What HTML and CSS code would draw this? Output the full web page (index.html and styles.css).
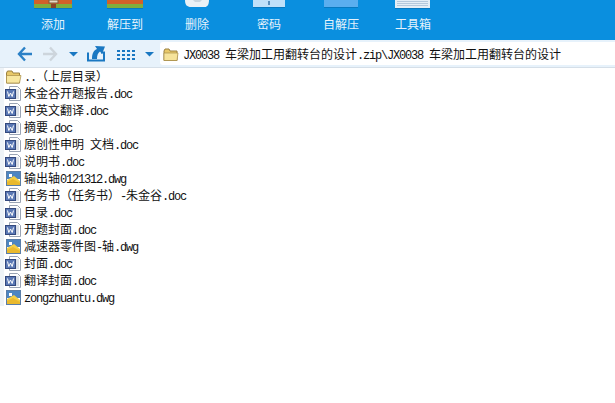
FILE: index.html
```html
<!DOCTYPE html>
<html lang="zh">
<head>
<meta charset="utf-8">
<title>WinRAR</title>
<link rel="stylesheet" href="styles.css">
</head>
<body>
<header class="toolbar">
  <div class="tool">
    <svg class="tool-icon" width="38" height="9" viewBox="0 0 38 9"><rect width="38" height="4" fill="#d2602a"/><rect y="4" width="38" height="4" fill="#7fae3e"/><rect y="8" width="38" height="1" fill="#0779c0"/><rect x="15" width="9" height="3" fill="#e8dcc4" stroke="#7b5a3a"/><rect x="17" y="4" width="5" height="4" fill="#8a4526"/></svg>
    <span>添加</span>
  </div>
  <div class="tool">
    <svg class="tool-icon" width="38" height="9" viewBox="0 0 38 9"><rect x="1" width="36" height="4" fill="#d2602a"/><rect x="1" y="4" width="36" height="4" fill="#7fae3e"/><rect x="1" y="8" width="36" height="1" fill="#0779c0"/></svg>
    <span>解压到</span>
  </div>
  <div class="tool">
    <svg class="tool-icon" width="38" height="9" viewBox="0 0 38 9"><path d="M7 0C7 5 9 7 13 7H27C29 7 31 5 31 0Z" fill="#e9f1f6"/><path d="M15 0H24L22 2H17Z" fill="#c9d6df"/></svg>
    <span>删除</span>
  </div>
  <div class="tool">
    <svg class="tool-icon" width="38" height="9" viewBox="0 0 38 9"><rect x="3" width="32" height="7" fill="#bfe0f9"/><rect x="18" y="1" width="2" height="4" fill="#5a8fbd"/><rect x="3" y="7" width="32" height="1" fill="#0779c0"/></svg>
    <span>密码</span>
  </div>
  <div class="tool">
    <svg class="tool-icon" width="38" height="9" viewBox="0 0 38 9"><rect x="2" width="34" height="7" fill="#5aaeef"/><rect x="2" y="7" width="34" height="1" fill="#0779c0"/></svg>
    <span>自解压</span>
  </div>
  <div class="tool">
    <svg class="tool-icon" width="38" height="9" viewBox="0 0 38 9"><rect x="1" width="35" height="8" fill="#e4eef6"/><path d="M3 1.5H34M3 3.5H34M3 5.5H34" stroke="#b4c8dc"/><rect x="1" y="8" width="35" height="1" fill="#0779c0"/></svg>
    <span>工具箱</span>
  </div>
</header>
<nav class="navbar">
  <svg class="nav-icons" width="160" height="27" viewBox="0 0 160 27">
    <path d="M19 14H32M25 7.5L19 14L25 20.5" fill="none" stroke="#2a80c6" stroke-width="2.4"/>
    <path d="M43 14H56M50 7.5L56 14L50 20.5" fill="none" stroke="#cdd5dc" stroke-width="2.4"/>
    <path d="M69 12H78L73.500 16.500Z" fill="#1a78c2"/>
    <path d="M88 12.500V20.500H104V12.500H101" fill="none" stroke="#1a78c2" stroke-width="2"/>
    <path d="M92 19C92 13 94 10 97 9L95 6L105 6.500L102 14L100 11.500C98 13 97 15 97 19Z" fill="#1a78c2"/>
    <path d="M117 10h3v2h-3zM122 10h3v2h-3zM127 10h3v2h-3zM132 10h3v2h-3zM117 14h3v2h-3zM122 14h3v2h-3zM127 14h3v2h-3zM132 14h3v2h-3zM117 18h3v2h-3zM122 18h3v2h-3zM127 18h3v2h-3zM132 18h3v2h-3z" fill="#1a78c2"/>
    <path d="M145 12H154L149.500 16.500Z" fill="#1a78c2"/>
  </svg>
  <div class="path">
    <svg class="folder" width="16" height="14" viewBox="0 0 16 14"><path d="M1 3L2 1H6L7 3H14V12.500H1Z" fill="#e8c868" stroke="#9a8040"/><path d="M1 5H15L14 12.500H1Z" fill="#f6e39a" stroke="#a88c48" stroke-width=".7"/></svg>
    <span class="label"><span class="m">JX0038 </span>车梁加工用翻转台的设计<span class="m">.zip\JX0038 </span>车梁加工用翻转台的设计</span>
  </div>
</nav>
<main class="list">
  <div class="row"><svg class="ic" width="17" height="15" viewBox="0 0 17 15"><use href="#i-folder"/></svg><span class="label"><span class="m">..</span>（上层目录）</span></div>
  <div class="row"><svg class="ic" width="17" height="15" viewBox="0 0 17 15"><use href="#i-word"/></svg><span class="label">朱金谷开题报告<span class="m">.doc</span></span></div>
  <div class="row"><svg class="ic" width="17" height="15" viewBox="0 0 17 15"><use href="#i-word"/></svg><span class="label">中英文翻译<span class="m">.doc</span></span></div>
  <div class="row"><svg class="ic" width="17" height="15" viewBox="0 0 17 15"><use href="#i-word"/></svg><span class="label">摘要<span class="m">.doc</span></span></div>
  <div class="row"><svg class="ic" width="17" height="15" viewBox="0 0 17 15"><use href="#i-word"/></svg><span class="label">原创性申明<span class="m"> </span>文档<span class="m">.doc</span></span></div>
  <div class="row"><svg class="ic" width="17" height="15" viewBox="0 0 17 15"><use href="#i-word"/></svg><span class="label">说明书<span class="m">.doc</span></span></div>
  <div class="row"><svg class="ic" width="17" height="15" viewBox="0 0 17 15"><use href="#i-dwg"/></svg><span class="label">输出轴<span class="m">0121312.dwg</span></span></div>
  <div class="row"><svg class="ic" width="17" height="15" viewBox="0 0 17 15"><use href="#i-word"/></svg><span class="label">任务书（任务书）<span class="m">-</span>朱金谷<span class="m">.doc</span></span></div>
  <div class="row"><svg class="ic" width="17" height="15" viewBox="0 0 17 15"><use href="#i-word"/></svg><span class="label">目录<span class="m">.doc</span></span></div>
  <div class="row"><svg class="ic" width="17" height="15" viewBox="0 0 17 15"><use href="#i-word"/></svg><span class="label">开题封面<span class="m">.doc</span></span></div>
  <div class="row"><svg class="ic" width="17" height="15" viewBox="0 0 17 15"><use href="#i-dwg"/></svg><span class="label">减速器零件图<span class="m">-</span>轴<span class="m">.dwg</span></span></div>
  <div class="row"><svg class="ic" width="17" height="15" viewBox="0 0 17 15"><use href="#i-word"/></svg><span class="label">封面<span class="m">.doc</span></span></div>
  <div class="row"><svg class="ic" width="17" height="15" viewBox="0 0 17 15"><use href="#i-word"/></svg><span class="label">翻译封面<span class="m">.doc</span></span></div>
  <div class="row"><svg class="ic" width="17" height="15" viewBox="0 0 17 15"><use href="#i-dwg"/></svg><span class="label"><span class="m">zongzhuantu.dwg</span></span></div>
</main>
<svg class="defs" width="0" height="0">
  <defs>
    <g id="i-folder"><path d="M1.500 4L2.500 2H7L8 4H14.500V14H1.500Z" fill="#e8c868" stroke="#9a8040"/><path d="M1.500 6.500H16L14.500 14H1.500Z" fill="#f8e79f" stroke="#a88c48" stroke-width=".7"/></g>
    <g id="i-word"><path d="M4.500 .5H12.500L15.500 3.500V14.500H4.500Z" fill="#fff" stroke="#9aa4b4"/><path d="M11 4H14M11 6H14M11 8H14M11 10H14M11 12H14" stroke="#b8c2d0"/><rect x=".5" y="3.500" width="10" height="9" fill="#5a78b4" stroke="#33497e"/><path d="M2.500 5.500L3.800 10.500L5.500 7L7.200 10.500L8.500 5.500" fill="none" stroke="#fff"/></g>
    <g id="i-dwg"><rect x="1.500" y=".5" width="14" height="14" fill="#fff" stroke="#5a7ea8"/><rect x="2" y="1" width="13" height="7" fill="#4c86c2"/><path d="M2 14V9L9 5L15 10V14Z" fill="#f3cf45"/><path d="M2 11L8 8L15 12V14H2Z" fill="#e9b92e"/><rect x="4" y="3" width="3" height="3" fill="#fff"/></g>
  </defs>
</svg>
</body>
</html>
```
FILE: styles.css
```css
* { box-sizing: border-box; }
html, body { margin: 0; padding: 0; }
body {
  width: 615px;
  height: 403px;
  overflow: hidden;
  background: #fff;
  font-family: "Noto Sans CJK SC", "Liberation Mono", monospace;
}
.toolbar {
  display: flex;
  height: 40px;
  padding-left: 34px;
  background: #0a8fdf;
  color: #e6f3fc;
  font-size: 12px;
}
.tool {
  display: flex;
  flex-direction: column;
  align-items: center;
  width: 38px;
  margin-right: 34px;
}
.tool-icon { flex: none; display: block; }
.tool span { white-space: nowrap; line-height: 16px; margin-top: 7px; }
.navbar {
  display: flex;
  align-items: flex-start;
  height: 28px;
  padding-top: 2px;
  background: #e7f2fb;
  border-bottom: 1px solid #d5dfe8;
}
.nav-icons { flex: none; margin-top: -2px; }
.path {
  flex: 1;
  display: flex;
  align-items: center;
  gap: 4px;
  height: 23px;
  padding: 2px 0 0 3px;
  background: #fff;
  border-radius: 3px 0 0 3px;
  color: #111;
}
.label {
  font-size: 12px;
  line-height: 14px;
  white-space: pre;
  color: #111;
}
.m {
  font-family: "Liberation Mono", monospace;
  font-size: 12px;
  letter-spacing: -1.2px;
}
.list {
  border-left: 4px solid #eef3f7;
  padding: 0 0 0 1px;
}
.row {
  display: flex;
  align-items: center;
  height: 17px;
  color: #111;
}
.ic { flex: none; margin-right: 2px; }
.defs { position: absolute; }
```
